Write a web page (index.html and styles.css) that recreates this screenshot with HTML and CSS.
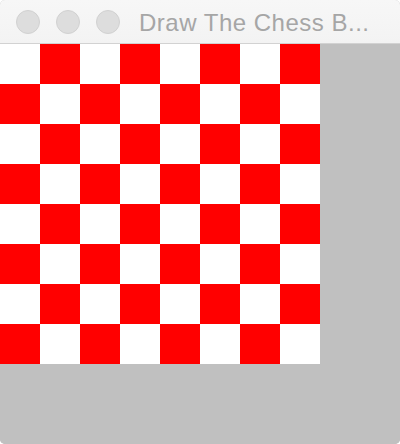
FILE: index.html
```html
<!DOCTYPE html>
<html>
<head>
<meta charset="utf-8">
<link rel="stylesheet" href="styles.css">
</head>
<body>
<div class="window">
  <div class="titlebar">
    <div class="lights">
      <span class="light"></span>
      <span class="light"></span>
      <span class="light"></span>
    </div>
    <div class="title">Draw The Chess B...</div>
  </div>
  <div class="content">
    <div class="board">
      <div class="w"></div><div class="r"></div><div class="w"></div><div class="r"></div><div class="w"></div><div class="r"></div><div class="w"></div><div class="r"></div>
      <div class="r"></div><div class="w"></div><div class="r"></div><div class="w"></div><div class="r"></div><div class="w"></div><div class="r"></div><div class="w"></div>
      <div class="w"></div><div class="r"></div><div class="w"></div><div class="r"></div><div class="w"></div><div class="r"></div><div class="w"></div><div class="r"></div>
      <div class="r"></div><div class="w"></div><div class="r"></div><div class="w"></div><div class="r"></div><div class="w"></div><div class="r"></div><div class="w"></div>
      <div class="w"></div><div class="r"></div><div class="w"></div><div class="r"></div><div class="w"></div><div class="r"></div><div class="w"></div><div class="r"></div>
      <div class="r"></div><div class="w"></div><div class="r"></div><div class="w"></div><div class="r"></div><div class="w"></div><div class="r"></div><div class="w"></div>
      <div class="w"></div><div class="r"></div><div class="w"></div><div class="r"></div><div class="w"></div><div class="r"></div><div class="w"></div><div class="r"></div>
      <div class="r"></div><div class="w"></div><div class="r"></div><div class="w"></div><div class="r"></div><div class="w"></div><div class="r"></div><div class="w"></div>
    </div>
  </div>
</div>
</body>
</html>
```
FILE: styles.css
```css
html, body {
  margin: 0;
  padding: 0;
  background: #ffffff;
}
.window {
  width: 400px;
  height: 444px;
  display: flex;
  flex-direction: column;
  border-radius: 5px;
  overflow: hidden;
  background: #c0c0c0;
}
.titlebar {
  height: 43px;
  flex: none;
  display: flex;
  align-items: center;
  background: linear-gradient(#f7f7f7, #f3f3f3);
  border-bottom: 1px solid #d2d2d2;
}
.lights {
  display: flex;
  gap: 16px;
  padding-left: 16px;
}
.light {
  width: 22px;
  height: 22px;
  border-radius: 50%;
  background: #dddddd;
  border: 1px solid #d1d1d1;
}
.title {
  margin-left: 19px;
  font-family: "Liberation Sans", Arial, sans-serif;
  font-size: 24px;
  letter-spacing: 0.5px;
  color: #a6a6a6;
  white-space: nowrap;
  line-height: 28px;
  margin-top: 2px;
}
.content {
  flex: 1;
  background: #c0c0c0;
}
.board {
  display: grid;
  grid-template-columns: repeat(8, 40px);
  grid-template-rows: repeat(8, 40px);
  width: 320px;
}
.w { background: #ffffff; }
.r { background: #ff0000; }
```
